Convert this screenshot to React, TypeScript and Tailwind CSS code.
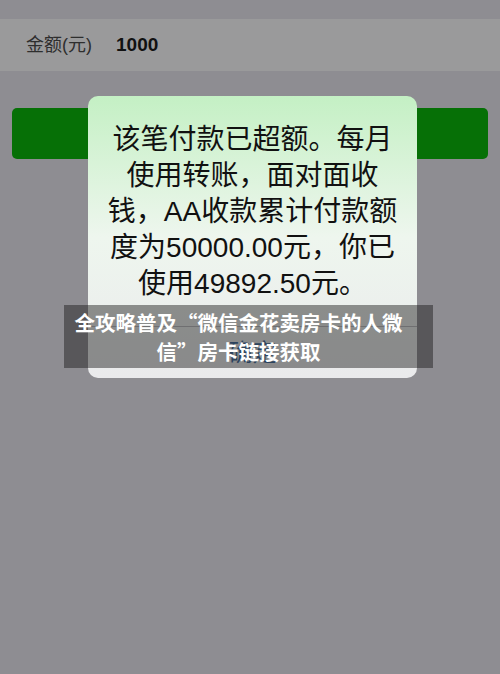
export default function App() {
  const lines = [
    "该笔付款已超额。每月",
    "使用转账，面对面收",
    "钱，AA收款累计付款额",
    "度为50000.00元，你已",
    "使用49892.50元。",
  ];

  return (
    <div
      className="relative w-[500px] h-[674px] bg-[#8e8d92] overflow-hidden"
      style={{ fontFamily: '"Liberation Sans", "Noto Sans CJK SC", sans-serif' }}
    >
      {/* amount row */}
      <div className="pt-[19px]">
        <div className="h-[52px] bg-[#9a9a9b] flex items-center pl-[26px] gap-[24px]">
          <span className="text-[18px] text-[#2e2e2e]">金额(元)</span>
          <span className="text-[19px] font-bold text-[#111]">1000</span>
        </div>
      </div>

      {/* green button behind the dialog */}
      <div className="mt-[37px] mx-[12px] h-[51px] rounded-[5px] bg-[#067006]" />

      {/* alert dialog */}
      <div className="absolute left-[88px] top-[96px] w-[329px] h-[282px] rounded-[10px] overflow-hidden flex flex-col bg-gradient-to-b from-[#c4f0c4] via-[#eef6ee] to-[#eaeaec]">
        <div className="flex-1 pt-[26px] flex flex-col items-center text-[28px] leading-[36px] text-[#111]">
          {lines.map((l) => (
            <div key={l}>{l}</div>
          ))}
        </div>
        <div className="h-[52px] border-t border-[#b9b9bd] flex items-center justify-center">
          <span className="text-[24px] text-[#3d6898]">确定</span>
        </div>
      </div>

      {/* caption banner */}
      <div
        className="absolute left-[64px] top-[305px] w-[369px] h-[63px] pr-[20px] bg-[#191919]/[0.46] flex flex-col items-center justify-center text-white font-bold text-[20.5px] leading-[29px]"
        style={{ fontFamily: '"Noto Sans CJK SC", sans-serif' }}
      >
        <div>全攻略普及“微信金花卖房卡的人微</div>
        <div>信”房卡链接获取</div>
      </div>
    </div>
  );
}
